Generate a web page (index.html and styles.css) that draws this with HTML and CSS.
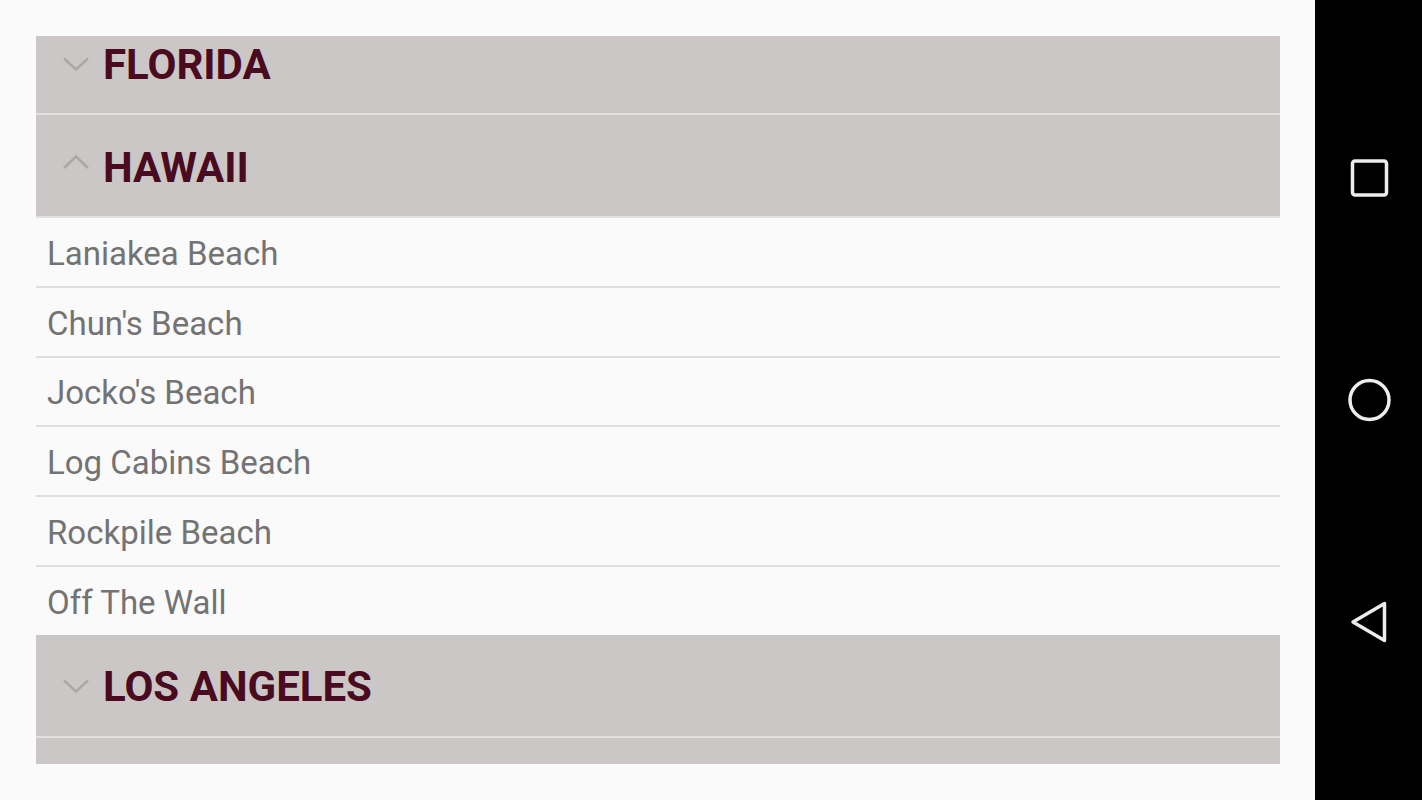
FILE: index.html
```html
<!DOCTYPE html>
<html>
<head>
<meta charset="utf-8">
<link rel="stylesheet" href="styles.css">
</head>
<body>
<div class="app">
  <main class="content">
    <div class="viewport">
      <div class="list">
        <div class="group-header">
          <svg class="chev" width="28" height="32" viewBox="0 0 28 32"><polyline points="2,11.5 14,22.5 26,11.5"/></svg>
          <span class="group-title">FLORIDA</span>
        </div>
        <div class="sep"></div>
        <div class="group-header">
          <svg class="chev" width="28" height="32" viewBox="0 0 28 32"><polyline points="2,18 14,6.5 26,18"/></svg>
          <span class="group-title">HAWAII</span>
        </div>
        <div class="sep"></div>
        <div class="item">Laniakea Beach</div>
        <div class="item">Chun's Beach</div>
        <div class="item">Jocko's Beach</div>
        <div class="item">Log Cabins Beach</div>
        <div class="item">Rockpile Beach</div>
        <div class="item last">Off The Wall</div>
        <div class="group-header">
          <svg class="chev" width="28" height="32" viewBox="0 0 28 32"><polyline points="2,11.5 14,22.5 26,11.5"/></svg>
          <span class="group-title">LOS ANGELES</span>
        </div>
        <div class="sep"></div>
        <div class="group-header"></div>
      </div>
    </div>
  </main>
  <nav class="navbar">
    <div class="nav-btn">
      <svg width="48" height="48" viewBox="0 0 48 48"><rect x="7.5" y="7" width="34" height="34" rx="2.5"/></svg>
    </div>
    <div class="nav-btn">
      <svg width="48" height="48" viewBox="0 0 48 48"><circle cx="24.5" cy="24" r="19.5"/></svg>
    </div>
    <div class="nav-btn">
      <svg width="48" height="48" viewBox="0 0 48 48"><path d="M39.5 5.5 L39.5 42.5 L8 24 Z" stroke-linejoin="round"/></svg>
    </div>
  </nav>
</div>
</body>
</html>
```
FILE: styles.css
```css
html, body {
  margin: 0;
  padding: 0;
  background: #fafafa;
}

.app {
  display: flex;
  width: 1422px;
  height: 800px;
  overflow: hidden;
}

.content {
  flex: 1;
  padding: 36px 35px 0 36px;
  background: #fafafa;
}

.viewport {
  height: 728px;
  overflow: hidden;
}

.list {
  margin-top: -24px;
}

.group-header {
  height: 101px;
  background: #cbc7c6;
  display: flex;
  align-items: center;
  padding-left: 26px;
  box-sizing: border-box;
}

.chev {
  margin-right: 13px;
  flex: none;
}

.chev polyline {
  fill: none;
  stroke: #aca8a7;
  stroke-width: 2.5;
}

.group-title {
  font-family: Roboto, "Liberation Sans", sans-serif;
  font-weight: 700;
  font-size: 42px;
  color: #4a0b20;
  line-height: 1;
  margin-top: 4px;
}

.sep {
  height: 2px;
  background: #e3e0df;
}

.item {
  height: 69.75px;
  box-sizing: border-box;
  border-bottom: 2px solid #dedede;
  display: flex;
  align-items: center;
  padding-left: 11px;
  padding-top: 3px;
  font-family: Roboto, "Liberation Sans", sans-serif;
  font-size: 33px;
  color: #737373;
}

.item.last {
  border-bottom: none;
  height: 67.75px;
}

.navbar {
  width: 107px;
  flex: none;
  background: #000;
  display: flex;
  flex-direction: column;
  align-items: center;
  padding-top: 154px;
  gap: 174px;
  box-sizing: border-box;
}

.nav-btn {
  width: 48px;
  height: 48px;
}

.nav-btn svg * {
  fill: none;
  stroke: #ececec;
  stroke-width: 3.5;
}
```
